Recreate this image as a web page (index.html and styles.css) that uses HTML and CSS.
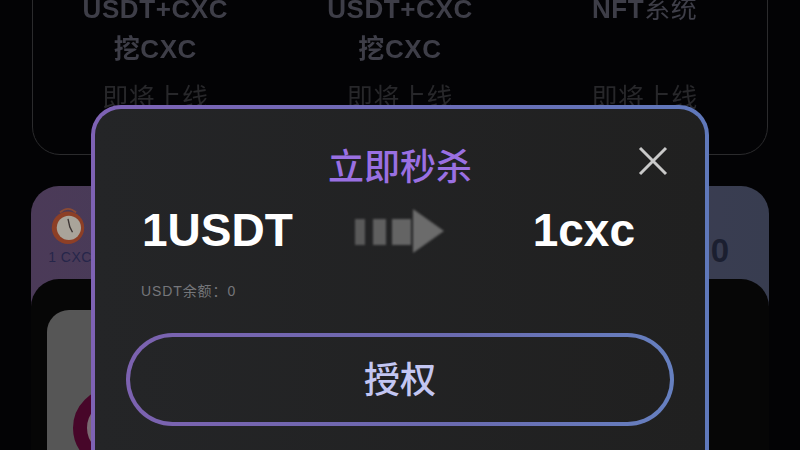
FILE: index.html
```html
<!DOCTYPE html>
<html lang="zh">
<head>
<meta charset="utf-8">
<title>立即秒杀</title>
<link rel="stylesheet" href="styles.css">
</head>
<body>
<div class="page">
  <section class="mining">
    <div class="mine-col">
      <div class="mine-name">USDT+CXC</div>
      <div class="mine-name">挖CXC</div>
      <div class="mine-soon">即将上线</div>
    </div>
    <div class="mine-col">
      <div class="mine-name">USDT+CXC</div>
      <div class="mine-name">挖CXC</div>
      <div class="mine-soon">即将上线</div>
    </div>
    <div class="mine-col">
      <div class="mine-name">NFT<span class="thin">系统</span></div>
      <div class="mine-name">&nbsp;</div>
      <div class="mine-soon">即将上线</div>
    </div>
  </section>

  <section class="promo">
    <div class="promo-head">
      <div class="price">
        <svg class="clock" viewBox="0 0 40 44" width="36" height="40">
          <path d="M11 7 Q20 -1 29 7" fill="none" stroke="#8a4a35" stroke-width="2"/>
          <circle cx="20" cy="24" r="18" fill="#8d3f26"/>
          <circle cx="21" cy="24" r="13.500" fill="#a9a49a"/>
          <path d="M20 14 L22 23 L25 29" fill="none" stroke="#3c3533" stroke-width="1.500"/>
        </svg>
        <div class="price-label">1 CXC</div>
      </div>
      <div class="count">0</div>
    </div>
    <div class="panel">
      <div class="product">
        <div class="ring"></div>
      </div>
    </div>
  </section>

  <div class="modal">
    <div class="modal-inner">
      <div class="modal-title">立即秒杀</div>
      <button class="close" aria-label="关闭">
        <svg viewBox="0 0 30 30" width="30" height="30">
          <path d="M2 2 L28 28 M28 2 L2 28" stroke="#c9c9c9" stroke-width="3" fill="none"/>
        </svg>
      </button>
      <div class="swap">
        <div class="amount">1USDT</div>
        <svg class="arrow" viewBox="0 0 90 44" width="90" height="44">
          <rect x="0" y="10" width="10" height="26" fill="#595959"/>
          <rect x="18" y="10" width="13" height="26" fill="#5f5f5f"/>
          <rect x="37" y="10" width="19" height="26" fill="#646464"/>
          <path d="M58 0 L89 22 L58 44 Z" fill="#6b6b6b"/>
        </svg>
        <div class="amount">1cxc</div>
      </div>
      <div class="balance">USDT余额：0</div>
      <div class="action"><div class="action-inner">授权</div></div>
    </div>
  </div>
</div>
</body>
</html>
```
FILE: styles.css
```css
* { box-sizing: border-box; }
html, body { margin: 0; padding: 0; background: #030305; }
body { font-family: "Liberation Sans", "Noto Sans CJK SC", sans-serif; }

.page {
  position: relative;
  width: 800px;
  height: 450px;
  overflow: hidden;
  background: #030305;
}

/* Mining card behind the modal */
.mining {
  display: grid;
  grid-template-columns: repeat(3, 1fr);
  height: 195px;
  margin: -40px 32px 0;
  padding-top: 28px;
  border: 1px solid #2b2b2d;
  border-radius: 28px;
  filter: blur(.5px);
}
.mine-col { text-align: center; }
.mine-name {
  font-size: 26px;
  font-weight: 700;
  line-height: 40px;
  letter-spacing: .6px;
  color: #3e3e48;
}
.thin { font-weight: 400; }
.mine-soon {
  margin-top: 11px;
  font-size: 26px;
  line-height: 36px;
  letter-spacing: .6px;
  color: #27272a;
}

/* Promo card behind the modal */
.promo {
  height: 300px;
  margin: 31px 31px 0;
  border-radius: 28px 28px 0 0;
  background: linear-gradient(90deg, #4b3a58 0%, #3e3d55 60%, #383d50 100%);
}
.promo-head {
  display: flex;
  justify-content: space-between;
  height: 93px;
  padding: 18px 40px 0 16px;
}
.price { display: flex; flex-direction: column; align-items: center; width: 46px; }
.clock { display: block; margin: 2px 4px 0 0; filter: blur(.5px); }
.price-label {
  margin-top: 3px;
  font-size: 14px;
  line-height: 16px;
  letter-spacing: .5px;
  color: #26264a;
  white-space: nowrap;
}
.count {
  margin-top: 28px;
  font-size: 33px;
  font-weight: 700;
  line-height: 38px;
  color: #1b1f30;
}
.panel {
  height: 207px;
  padding: 31px 0 0 16px;
  border-radius: 28px 28px 0 0;
  background: #060606;
}
.product {
  width: 300px;
  height: 200px;
  padding: 78px 0 0 26px;
  border-radius: 22px 0 0 0;
  background: #565656;
}
.ring {
  width: 80px;
  height: 80px;
  border: 14px solid #470629;
  border-radius: 50%;
  background: #7a6a72;
}

/* Modal */
.modal {
  position: absolute;
  left: 91px;
  top: 105px;
  width: 618px;
  height: 420px;
  padding: 4px;
  border-radius: 30px;
  background: linear-gradient(90deg, #7e62b4 0%, #6b6cb6 55%, #5f78ba 100%);
}
.modal-inner {
  position: relative;
  height: 100%;
  padding: 36px 31px 0;
  border-radius: 26px;
  background: linear-gradient(90deg, #242527 0%, #202020 100%);
}
.modal-title {
  font-size: 36px;
  font-weight: 500;
  line-height: 46px;
  text-align: center;
  color: #9a70e2;
}
.close {
  position: absolute;
  top: 37px;
  right: 37px;
  width: 30px;
  height: 30px;
  padding: 0;
  border: 0;
  background: none;
}
.close svg { display: block; }
.swap {
  display: flex;
  align-items: center;
  justify-content: space-between;
  height: 60px;
  margin-top: 9px;
  padding-left: 16px;
  padding-right: 39px;
}
.amount {
  font-size: 46px;
  font-weight: 700;
  line-height: 56px;
  color: #fff;
}
.arrow { display: block; margin: 2px 25px 0 0; filter: blur(.8px); }
.balance {
  margin-top: 22px;
  padding-left: 15px;
  font-size: 14px;
  line-height: 18px;
  letter-spacing: .9px;
  color: #75767a;
}
.action {
  height: 93px;
  margin-top: 33px;
  padding: 4px;
  border-radius: 47px;
  background: linear-gradient(90deg, #7c62b0 0%, #6a6bb0 60%, #6680c0 100%);
}
.action-inner {
  display: flex;
  align-items: center;
  justify-content: center;
  height: 100%;
  padding-bottom: 6px;
  border-radius: 43px;
  background: linear-gradient(90deg, #242527 0%, #202020 100%);
  font-size: 36px;
  font-weight: 500;
  color: #c3c6f2;
}
```
